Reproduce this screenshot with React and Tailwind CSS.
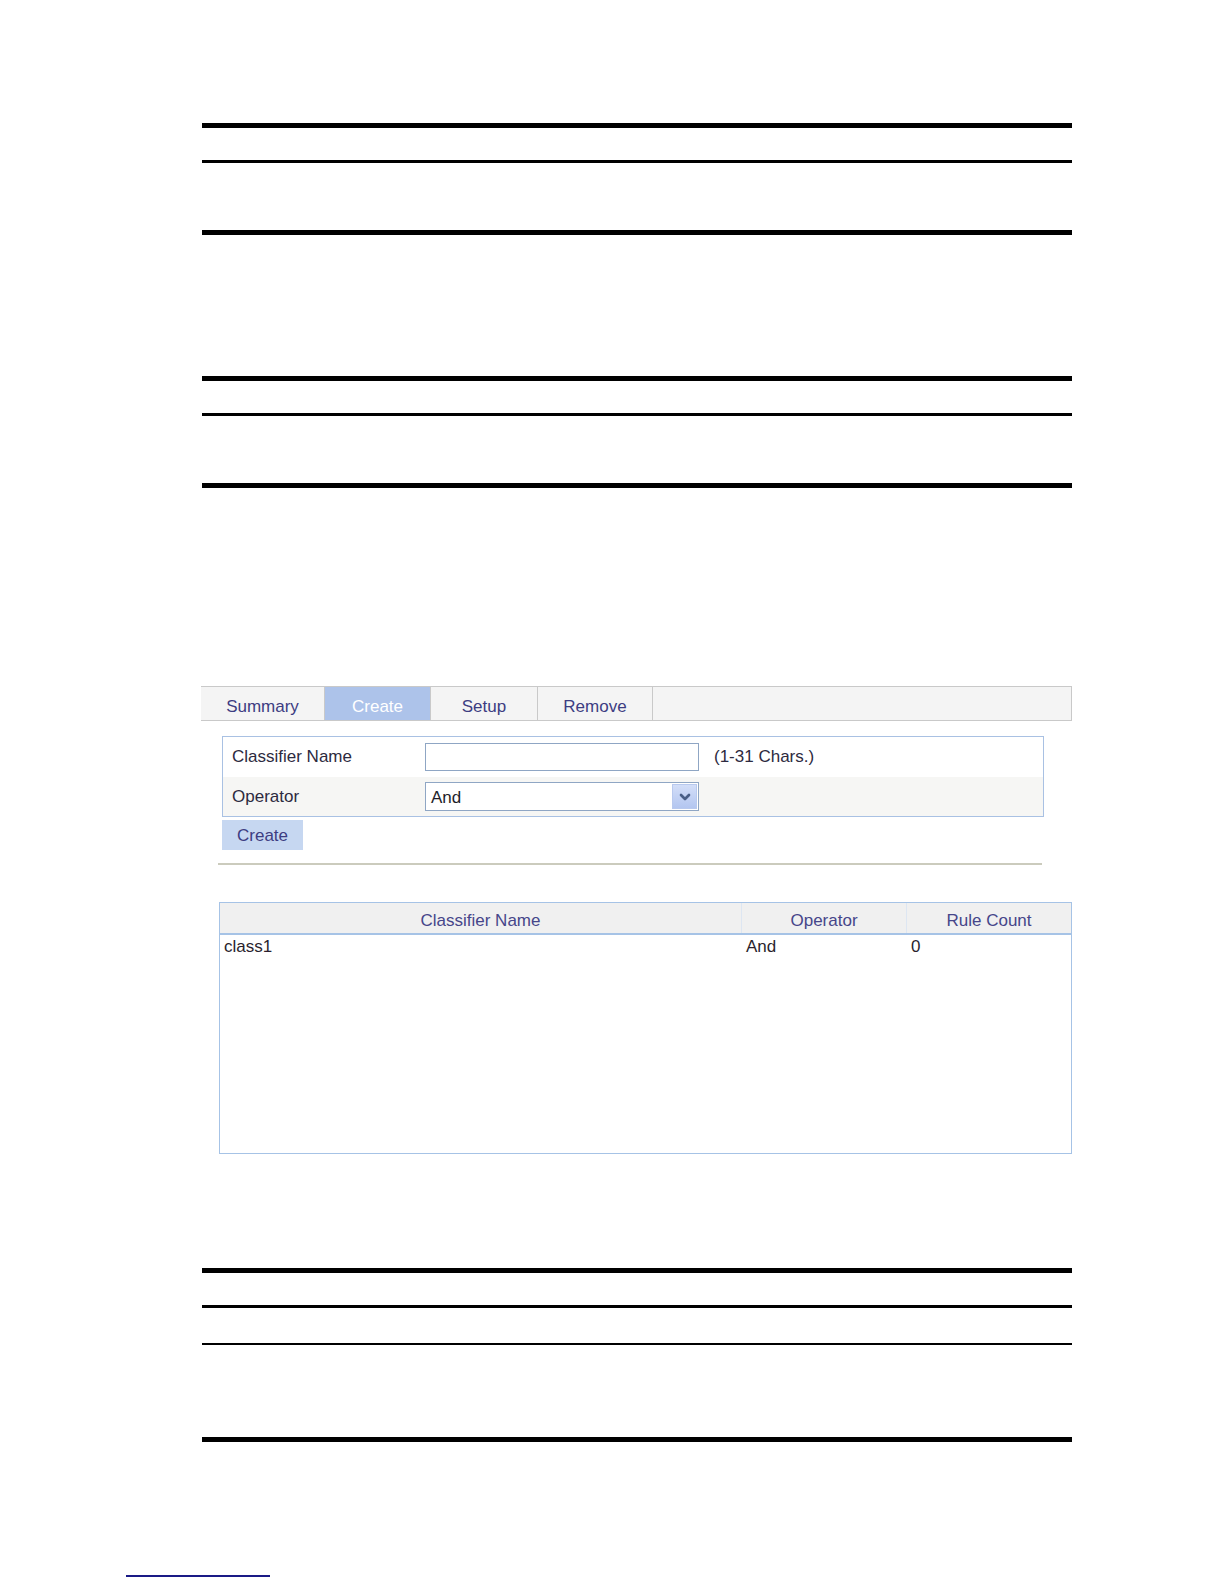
import { ChevronDown } from "lucide-react";

// Rule lines of a document table: thick top, header rule, body, thick bottom
const RuleTable = ({ className = "" }) => (
  <div className={className}>
    <div className="h-[5px] bg-black" />
    <div className="h-[32px]" />
    <div className="h-[3px] bg-black" />
    <div className="h-[67px]" />
    <div className="h-[5px] bg-black" />
  </div>
);

const tabs = [
  { label: "Summary", w: "w-[124px]" },
  { label: "Create", w: "w-[106px]", active: true },
  { label: "Setup", w: "w-[107px]" },
  { label: "Remove", w: "w-[115px]" },
];

const classifiers = [{ name: "class1", operator: "And", count: 0 }];

export default function App() {
  return (
    <div className="w-[1224px] min-h-[1584px] bg-white font-['Liberation_Sans',Arial,sans-serif] text-[17px]">
      <div className="ml-[202px] w-[870px] pt-[123px]">
        <RuleTable />
        <RuleTable className="mt-[141px]" />

        {/* Web UI screenshot */}
        <div className="mt-[198px]">
          <div className="flex h-[35px] bg-[#f4f4f4] border-y border-r border-[#c9c9c9] -ml-[1px]">
            {tabs.map((t) => (
              <div
                key={t.label}
                className={`${t.w} flex items-center justify-center pt-[6px] border-r border-[#c9c9c9] ${
                  t.active ? "bg-[#adc3ea] text-white" : "text-[#3d3d82]"
                }`}
              >
                {t.label}
              </div>
            ))}
          </div>

          <div className="ml-[20px] mt-[15px] w-[822px] border border-[#a9c1e3]">
            <div className="flex items-center h-[40px] bg-white">
              <div className="w-[202px] pl-[9px] text-[#2d2a40]">Classifier Name</div>
              <div className="w-[274px] h-[28px] border border-[#8fa6c4] bg-white" />
              <div className="ml-[15px] text-[#2d2a40]">(1-31 Chars.)</div>
            </div>
            <div className="flex items-center h-[39px] bg-[#f6f6f4]">
              <div className="w-[202px] pl-[9px] text-[#2d2a40]">Operator</div>
              <div className="w-[274px] h-[29px] border border-[#8fa6c4] bg-white flex items-center justify-between pl-[5px] pr-[1px]">
                <span className="text-[#1e1e2a] pt-[2px]">And</span>
                <div className="w-[25px] h-[25px] bg-gradient-to-b from-[#d3def8] to-[#b3c6f0] border border-[#b8c9ee] flex items-center justify-center">
                  <ChevronDown size={16} strokeWidth={4} className="text-[#4a5f86]" />
                </div>
              </div>
            </div>
          </div>

          <button className="ml-[20px] mt-[3px] w-[81px] h-[30px] bg-[#c6d7f1] text-[#3d3d82] flex items-center justify-center pt-[2px]">
            Create
          </button>

          <div className="ml-[16px] mt-[13px] w-[824px] h-[2px] bg-[#cbcbbd]" />

          <div className="ml-[17px] mt-[37px] w-[853px] h-[252px] border border-[#a6c3e6]">
            <div className="flex h-[32px] bg-[#f0f0f0] border-b-2 border-[#a6c3e6] text-[#46468a]">
              <div className="w-[521px] flex items-center justify-center pt-[5px]">Classifier Name</div>
              <div className="w-[165px] flex items-center justify-center pt-[5px] border-l border-[#dde6f2]">Operator</div>
              <div className="flex-1 flex items-center justify-center pt-[5px] border-l border-[#dde6f2]">Rule Count</div>
            </div>
            {classifiers.map((c) => (
              <div key={c.name} className="flex h-[24px] items-center text-[#2a1f2e]">
                <div className="w-[521px] pl-[4px]">{c.name}</div>
                <div className="w-[165px] pl-[5px]">{c.operator}</div>
                <div className="flex-1 pl-[5px]">{c.count}</div>
              </div>
            ))}
          </div>
        </div>

        {/* Third document table */}
        <div className="mt-[114px]">
          <div className="h-[5px] bg-black" />
          <div className="h-[32px]" />
          <div className="h-[3px] bg-black" />
          <div className="h-[35px]" />
          <div className="h-[2px] bg-black" />
          <div className="h-[92px]" />
          <div className="h-[5px] bg-black" />
        </div>
      </div>

      {/* Footnote separator */}
      <div className="ml-[126px] mt-[133px] w-[144px] h-[2px] bg-[#1a1a86]" />
    </div>
  );
}
